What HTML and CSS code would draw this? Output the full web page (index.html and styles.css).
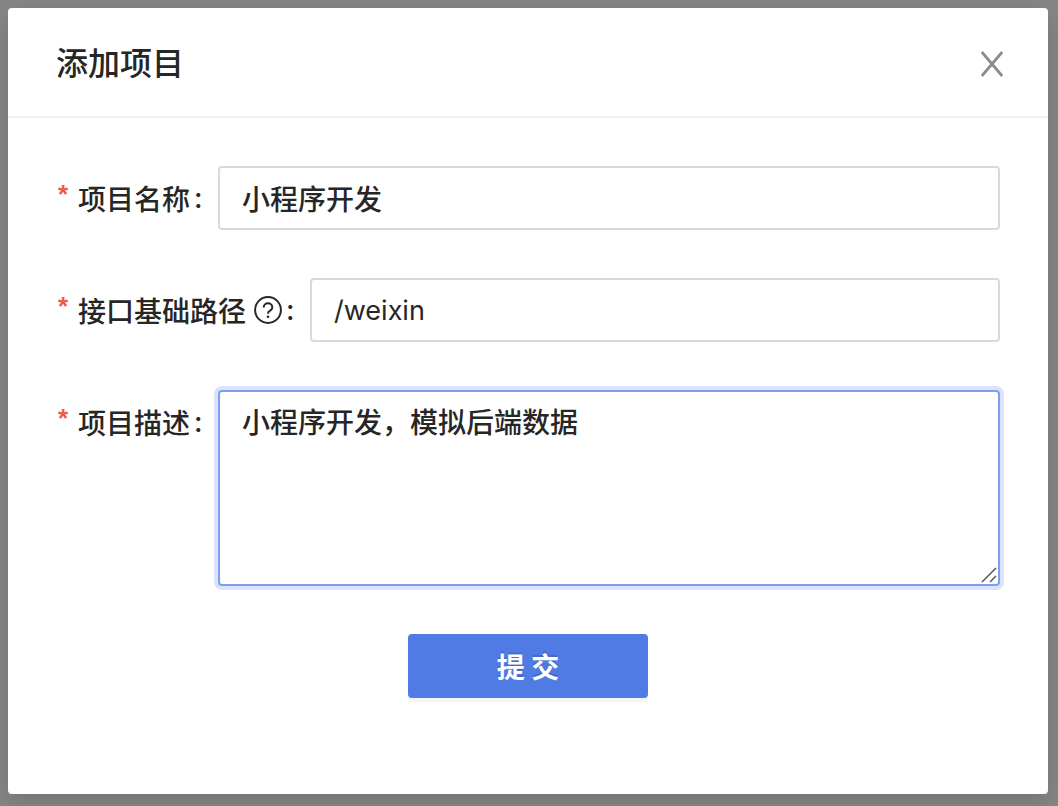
FILE: index.html
```html
<!DOCTYPE html>
<html lang="zh-CN">
<head>
<meta charset="utf-8">
<meta name="viewport" content="width=device-width, initial-scale=1">
<title>添加项目</title>
<link rel="stylesheet" href="styles.css">
</head>
<body>
<div class="mask">
  <section class="modal" role="dialog" aria-labelledby="title">
    <header class="modal-header">
      <h1 class="modal-title" id="title">添加项目</h1>
      <button class="close" type="button" aria-label="关闭">
        <svg viewBox="0 0 24 26" width="24" height="26" fill="none" stroke="currentColor" stroke-width="2.800"><path d="M1.800 1 22.200 25M22.200 1 1.800 25"/></svg>
      </button>
    </header>
    <form class="modal-body">
      <div class="row">
        <label class="label" for="name"><span class="required">*</span><span>项目名称</span><span class="colon">:</span></label>
        <input class="field" id="name" type="text" value="小程序开发">
      </div>
      <div class="row">
        <label class="label" for="path"><span class="required">*</span><span>接口基础路径</span>
          <svg class="help" viewBox="0 0 28 28" width="28" height="28" fill="none" stroke="currentColor" stroke-width="2"><circle cx="14" cy="14" r="12.900"/><path d="M9.700 11.400c0-2.500 1.900-4.100 4.300-4.100s4.300 1.600 4.300 3.900c0 1.900-1.200 3-2.500 3.700-1.300.7-1.800 1.300-1.800 2.900"/><circle cx="14" cy="20.700" r="1.300" fill="currentColor" stroke="none"/></svg><span class="colon">:</span></label>
        <input class="field latin" id="path" type="text" value="/weixin">
      </div>
      <div class="row">
        <label class="label" for="desc"><span class="required">*</span><span>项目描述</span><span class="colon">:</span></label>
        <div class="area-wrap">
          <textarea class="field area" id="desc">小程序开发，模拟后端数据</textarea>
          <svg class="grip" viewBox="0 0 16 16" width="16" height="16" fill="none" stroke="currentColor" stroke-width="1.500"><path d="M1 15 15 1M9 15l6-6"/></svg>
        </div>
      </div>
      <button class="submit" type="submit">提 交</button>
    </form>
  </section>
</div>
</body>
</html>
```
FILE: styles.css
```css
* { box-sizing: border-box; }

body {
  margin: 0;
  font-family: Inter, "Noto Sans CJK SC", sans-serif;
  font-size: 28px;
  color: #262626;
}

.mask {
  display: flex;
  min-height: 100vh;
  padding: 8px 10px 12px 8px;
  background: #868686;
}

.modal {
  display: flex;
  flex-direction: column;
  flex: 1;
  min-width: 0;
  background: #fff;
  border-radius: 4px;
  box-shadow: 0 8px 24px rgba(0, 0, 0, 0.15);
}

.modal-header {
  display: flex;
  align-items: center;
  justify-content: space-between;
  padding: 34px 44px 30px 48px;
  border-bottom: 2px solid #f0f0f0;
}

.modal-title {
  margin: 0;
  font-size: 32px;
  font-weight: 500;
  line-height: 44px;
}

.close {
  display: flex;
  padding: 0;
  border: 0;
  background: none;
  color: #8c8c8c;
}

.modal-body {
  display: flex;
  flex-direction: column;
  gap: 48px;
  padding: 48px;
}

.row {
  display: flex;
  align-items: flex-start;
}

.label {
  display: flex;
  flex: none;
  align-items: center;
  height: 64px;
  font-weight: 500;
}

.required {
  width: 22px;
  padding: 0 0 8px 2px;
  font-family: "Liberation Sans", sans-serif;
  font-size: 26px;
  font-weight: 700;
  color: #f5574f;
}

.help { margin-left: 8px; }

.colon {
  width: 28px;
  padding-left: 4px;
  font-weight: 500;
}

.field {
  display: block;
  flex: 1;
  width: 100%;
  min-width: 0;
  height: 64px;
  margin: 0;
  padding: 8px 22px;
  border: 2px solid #d9d9d9;
  border-radius: 4px;
  outline: 0;
  background: #fff;
  color: inherit;
  font: inherit;
  font-weight: 500;
  line-height: 44px;
}

.latin {
  font-size: 27px;
  font-weight: 400;
}

.area-wrap {
  position: relative;
  flex: 1;
  min-width: 0;
}

.area {
  height: 196px;
  border-color: #7c9ff0;
  box-shadow: 0 0 0 4px #dbe4fa;
  line-height: 46px;
  resize: none;
}

.grip {
  position: absolute;
  right: 3px;
  bottom: 3px;
  color: #555;
}

.submit {
  align-self: center;
  width: 240px;
  height: 64px;
  border: 0;
  border-radius: 4px;
  background: #507ae4;
  box-shadow: 0 4px 0 rgba(0, 0, 0, 0.04);
  color: #fff;
  font: inherit;
  font-weight: 700;
  text-shadow: 0 -2px 0 rgba(0, 0, 0, 0.12);
}
```
